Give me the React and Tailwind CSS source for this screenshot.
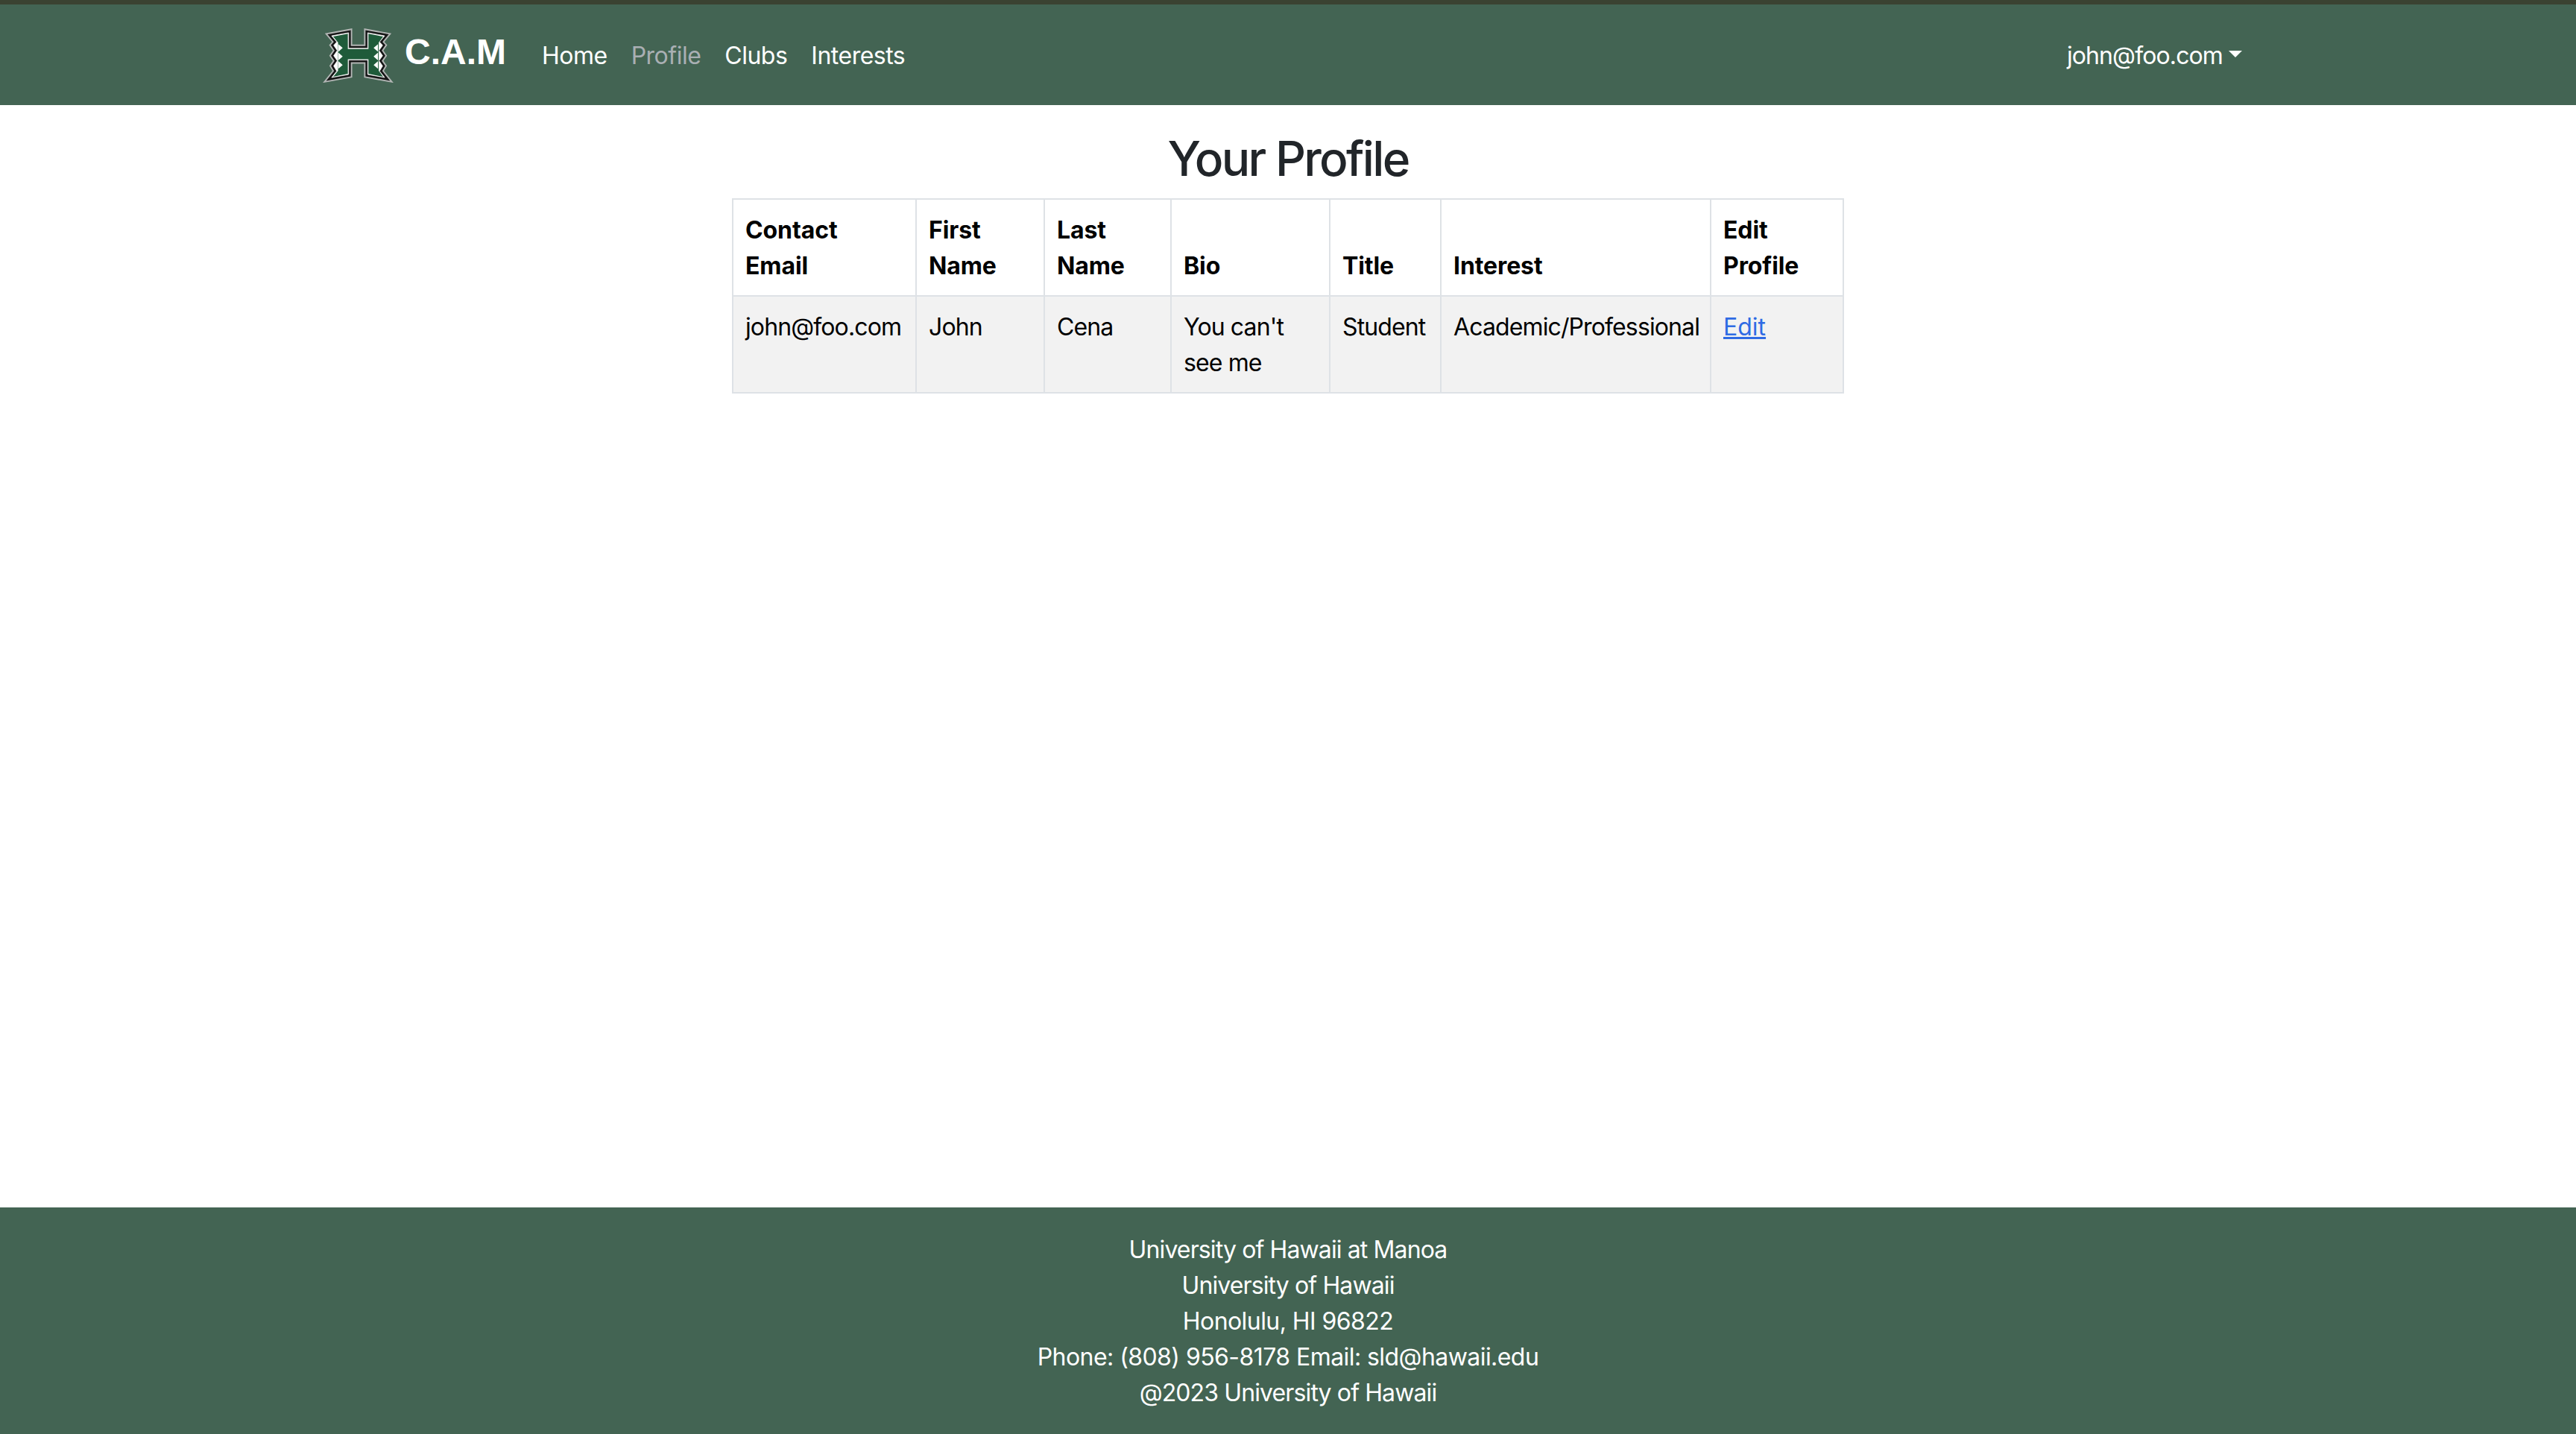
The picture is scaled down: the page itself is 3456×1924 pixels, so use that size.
const navLinks = [
  { label: "Home" },
  { label: "Profile", muted: true },
  { label: "Clubs" },
  { label: "Interests" },
];

const columns = [
  { label: ["Contact", "Email"], width: "w-[246px]" },
  { label: ["First", "Name"], width: "w-[172px]" },
  { label: ["Last", "Name"], width: "w-[170px]" },
  { label: ["Bio"], width: "w-[213px]" },
  { label: ["Title"], width: "w-[149px]" },
  { label: ["Interest"], width: "w-[362px]" },
  { label: ["Edit", "Profile"], width: "w-[178px]" },
];

// lines with digits run wider than the plain ones in the reference
const footerLines = [
  { text: "University of Hawaii at Manoa", track: "tracking-[-0.88px]" },
  { text: "University of Hawaii", track: "tracking-[-0.88px]" },
  { text: "Honolulu, HI 96822", track: "tracking-[-0.56px]" },
  { text: "Phone: (808) 956-8178 Email: sld@hawaii.edu", track: "tracking-[-0.56px]" },
  { text: "@2023 University of Hawaii", track: "tracking-[-0.88px]" },
];

const cell = "border-2 border-[#dee2e6] px-4 pt-[17px] pb-[15px]";

function Logo() {
  const outline =
    "82,78 148,66 148,126 222,126 222,66 288,78 268,102 280,115 266,135 280,155 266,175 280,195 268,215 288,240 222,228 222,172 148,172 148,228 82,240 102,215 90,195 104,175 90,155 104,135 90,115 102,102";
  const green =
    "88,81 145,70 145,129 225,129 225,70 282,81 265,104 265,214 282,237 225,225 225,169 145,169 145,225 88,237 107,214 107,104";
  return (
    <svg viewBox="46 46 278 214" className="w-[97px] h-[74px] shrink-0">
      <polygon points={outline} fill="#b3b6b5" stroke="#b3b6b5" strokeWidth="28" strokeMiterlimit="10" />
      <polygon points={outline} fill="#161616" stroke="#161616" strokeWidth="17" strokeMiterlimit="10" />
      <polygon points={outline} fill="#ffffff" stroke="#ffffff" strokeWidth="2" strokeMiterlimit="10" />
      <polygon points={green} fill="#1f5b3a" />
      <g fill="#ffffff">
        <polygon points="108,110 125,125 108,140" />
        <polygon points="108,143 125,158 108,173" />
        <polygon points="108,176 125,191 108,206" />
        <polygon points="262,110 245,125 262,140" />
        <polygon points="262,143 245,158 262,173" />
        <polygon points="262,176 245,191 262,206" />
      </g>
    </svg>
  );
}

export default function App() {
  return (
    <div className="min-h-screen flex flex-col bg-white font-['Inter',sans-serif] text-[32px] leading-[48px] tracking-[-0.88px] text-black">
      {/* navbar */}
      <nav className="h-[141px] bg-[#436453] border-t-[6px] border-[#3a4231] text-white">
        <div className="w-[2640px] mx-auto px-6 h-full flex items-center justify-between">
          <div className="flex items-center">
            <div className="flex items-center gap-[14px] mr-8">
              <Logo />
              <span className="font-['Liberation_Sans',sans-serif] text-[48px] leading-[72px] tracking-normal font-bold -mt-2">
                C.A.M
              </span>
            </div>
            {navLinks.map((link) => (
              <a
                key={link.label}
                className={`px-4 mt-[2px] tracking-[-0.5px] ${link.muted ? "text-[#a9afb3]" : "text-white"}`}
              >
                {link.label}
              </a>
            ))}
          </div>
          <div className="flex items-center px-4 mt-[2px]">
            <span>john@foo.com</span>
            <span className="ml-2 -mt-1 w-0 h-0 border-t-[9px] border-x-[9px] border-t-white border-x-transparent" />
          </div>
        </div>
      </nav>

      {/* profile table */}
      <main className="grow pt-8 flex flex-col items-center">
        <h2 className="text-[64px] leading-[79px] tracking-[-2.7px] font-medium text-[#212529] mb-[14px]">
          Your Profile
        </h2>
        <table className="table-fixed border-collapse w-[1490px]">
          <thead>
            <tr>
              {columns.map((col) => (
                <th
                  key={col.label[0]}
                  className={`${col.width} ${cell} tracking-[-0.1px] text-left align-bottom font-bold`}
                >
                  {col.label.map((line) => (
                    <div key={line}>{line}</div>
                  ))}
                </th>
              ))}
            </tr>
          </thead>
          <tbody>
            <tr className="bg-[#f2f2f2] align-top">
              <td className={cell}>john@foo.com</td>
              <td className={cell}>John</td>
              <td className={cell}>Cena</td>
              <td className={cell}>
                <div>You can't</div>
                <div>see me</div>
              </td>
              <td className={cell}>Student</td>
              <td className={cell}>Academic/Professional</td>
              <td className={cell}>
                <a className="text-[#2f6be4] underline tracking-normal">Edit</a>
              </td>
            </tr>
          </tbody>
        </table>
      </main>

      {/* footer */}
      <footer className="bg-[#436453] text-white text-center pt-[33px] pb-[31px]">
        {footerLines.map((line) => (
          <div key={line.text} className={line.track}>
            {line.text}
          </div>
        ))}
      </footer>
    </div>
  );
}
